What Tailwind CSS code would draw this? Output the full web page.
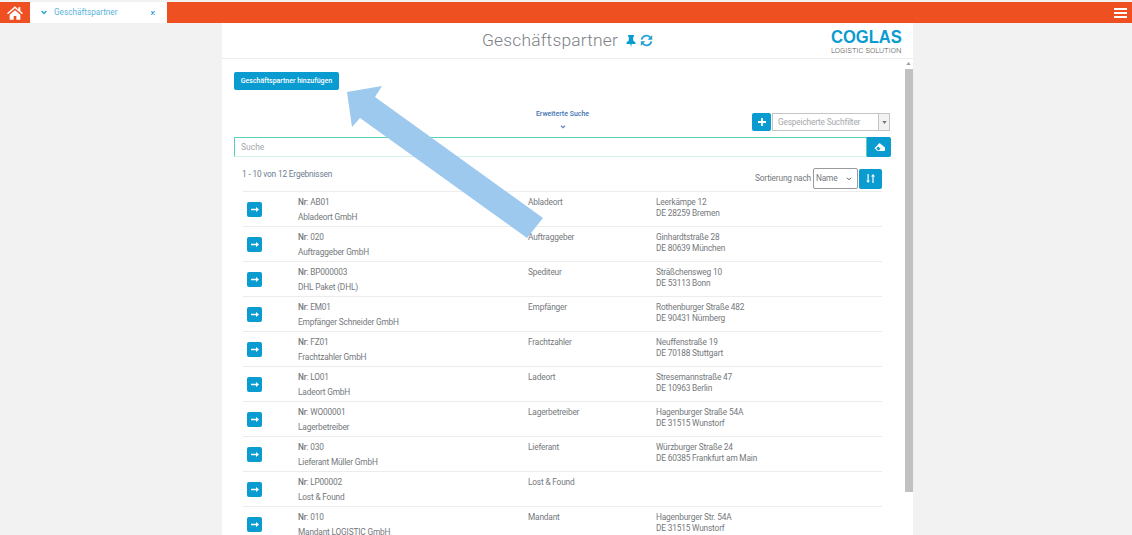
<!DOCTYPE html>
<html lang="de">
<head>
<meta charset="utf-8">
<title>Geschäftspartner</title>
<script src="https://cdn.jsdelivr.net/npm/@tailwindcss/browser@4"></script>
</head>
<body class="relative h-[535px] w-[1132px] overflow-hidden bg-[#f2f2f2] font-['Roboto',sans-serif] text-[8.300px] tracking-[-.17px] text-[#74787c]">
  <!-- top bar -->
  <nav class="mt-[2px] flex h-[21px] bg-[#ef5022]">
    <a class="flex w-[30px] items-center justify-center">
      <svg class="h-[14px] w-[16px] text-white" viewBox="0 0 24 20" fill="currentColor"><path d="M12 0 0 10.200l1.400 1.600L12 2.800l10.600 9 1.400-1.600-4-3.400V1.500h-3v3.200zM4 12.500V20h6v-5.500h4V20h6v-7.500l-8-6.800z"/></svg>
    </a>
    <div class="flex w-[137px] items-center bg-white pr-[12px] pl-[11px] text-[#5bb4dc]">
      <svg class="h-[5px] w-[6px] text-[#2a9fd6]" viewBox="0 0 10 8" fill="none" stroke="currentColor" stroke-width="2.400"><path d="m1 1.500 4 4 4-4"/></svg>
      <span class="ml-[7px] text-[8.200px] tracking-normal">Geschäftspartner</span>
      <svg class="ml-auto h-[4px] w-[4px] text-[#2a9fd6]" viewBox="0 0 6 6" stroke="currentColor" stroke-width="1.800"><path d="m.5.5 5 5m0-5-5 5"/></svg>
    </div>
    <button class="mr-[5px] ml-auto flex w-[13px] flex-col justify-center gap-[2px]">
      <span class="h-[2px] bg-white"></span><span class="h-[2px] bg-white"></span><span class="h-[2px] bg-white"></span>
    </button>
  </nav>

  <main class="ml-[222px] h-[512px] w-[691px] bg-white">
    <header class="relative flex h-[36px] items-center justify-center border-b border-[#eeeeee]">
      <h1 class="text-[17.400px] font-light tracking-[.2px] text-[#7b8086]">Geschäftspartner</h1>
      <svg class="ml-[8px] h-[12px] w-[10px] text-[#0a9bd0]" viewBox="0 0 10 12" fill="currentColor"><path d="M2 0h6v1.200L7.200 2v3.400L9.500 7.600V9H5.700L5 12l-.7-3H.5V7.600l2.300-2.200V2L2 1.200z"/></svg>
      <svg class="ml-[4px] h-[13px] w-[13px] text-[#2a9fd6]" viewBox="0 0 24 24" fill="none" stroke="currentColor" stroke-width="3.400"><path d="M3 10.500A9 9 0 0 1 18.500 6L21 8.500M21 13.500A9 9 0 0 1 5.500 18L3 15.500"/><path fill="currentColor" stroke="none" d="M22.500 2v8.500h-8.500zM1.500 22v-8.500h8.500z"/></svg>
      <div class="absolute top-[6px] right-[12px] flex w-[70px] flex-col items-stretch">
        <span class="origin-left scale-x-[.87] font-['Liberation_Sans',sans-serif] text-[19px] leading-[16px] font-bold tracking-normal whitespace-nowrap text-[#0a9bd0]">COGLAS</span>
        <span class="mt-[1px] text-[7.700px] leading-[9px] font-light tracking-normal whitespace-nowrap text-[#555]">LOGISTIC SOLUTION</span>
      </div>
    </header>

    <div class="flex h-[476px]">
      <section class="w-[682px] overflow-hidden pr-[13px] pl-[12px]">
        <button class="mt-[13px] block h-[18px] w-[105px] rounded-[2px] bg-[#0a9bd0] text-[7px] font-medium tracking-normal text-white">Geschäftspartner hinzufügen</button>

        <div class="mt-[18px] flex h-[28px] items-start">
          <div class="ml-[280px] flex w-[97px] flex-col items-center pt-[1px]">
            <span class="text-[7px] font-medium tracking-normal text-[#3f74b5]">Erweiterte Suche</span>
            <svg class="mt-[5px] h-[4px] w-[6px] text-[#5f87b5]" viewBox="0 0 10 8" fill="none" stroke="currentColor" stroke-width="2.200"><path d="m1 1.500 4 4 4-4"/></svg>
          </div>
          <div class="mt-[5px] mr-[1px] ml-auto flex h-[18px] items-center">
            <button class="flex h-[18px] w-[19px] items-center justify-center rounded-[2px] bg-[#0a9bd0]">
              <svg class="h-[8px] w-[8px] text-white" viewBox="0 0 8 8" stroke="currentColor" stroke-width="1.800"><path d="M4 0v8M0 4h8"/></svg>
            </button>
            <div class="ml-[1px] flex h-[18px] w-[118px] items-center border border-[#c4c4c4] pl-[5px] text-[#a5a8ac]">
              Gespeicherte Suchfilter
              <span class="ml-auto flex h-full w-[11px] items-center justify-center border-l border-[#c4c4c4] bg-[#f2f2f2]">
                <svg class="h-[3px] w-[5px] text-[#777]" viewBox="0 0 6 4" fill="currentColor"><path d="M0 0h6L3 4z"/></svg>
              </span>
            </div>
          </div>
        </div>

        <div class="mt-[1px] flex h-[20px]">
          <div class="flex flex-1 items-center border border-[#5fd0b8] border-b-[#d5f3ec] pl-[6px] text-[8.500px] tracking-normal text-[#a5a8ac]">Suche</div>
          <button class="flex w-[24px] items-center justify-center rounded-r-[2px] bg-[#0a9bd0]">
            <svg class="h-[8px] w-[11px]" viewBox="0 0 22 16" fill="#fff"><path d="M11 0 22 9v5a2 2 0 0 1-2 2H7L1 10.500z"/><path fill="#0a9bd0" d="M4.500 10.500 8.500 7 13 12l-3 2.500H8z"/></svg>
          </button>
        </div>

        <div class="mt-[7px] flex h-[25px] justify-between pr-[9px] pl-[8px]">
          <span class="pt-[4px] text-[#6d7d90]">1 - 10 von 12 Ergebnissen</span>
          <div class="mt-[4px] flex h-[21px] items-center">
            <span class="mr-[2px]">Sortierung nach</span>
            <div class="flex h-[21px] w-[45px] items-center justify-between rounded-[2px] border border-[#9a9a9a] pr-[5px] pl-[2px]">
              Name
              <svg class="h-[4px] w-[6px] text-[#555]" viewBox="0 0 10 8" fill="none" stroke="currentColor" stroke-width="2"><path d="m1 1.500 4 4 4-4"/></svg>
            </div>
            <button class="ml-[1px] flex h-[20px] w-[23px] items-center justify-center rounded-[2px] bg-[#0a9bd0]">
              <svg class="h-[9px] w-[9px] text-white" viewBox="0 0 9 9" fill="currentColor"><path d="M1.500 0h1.200v6.500H4L2.100 9 .2 6.500h1.300zM5 2.500 7 0l2 2.500H7.600V9H6.400V2.500z"/></svg>
            </button>
          </div>
        </div>

        <ul class="mt-[2px] mr-[9px] ml-[9px]">
          <li class="flex h-[35px] border-t border-[#ececec]">
            <div class="flex w-[55px] items-center pl-[4px]"><button class="flex h-[15px] w-[15px] items-center justify-center rounded-[2px] bg-[#0a9bd0]"><svg class="h-[5px] w-[8px] text-white" viewBox="0 0 8 5" fill="currentColor"><path d="M0 1.700h5V0l3 2.500L5 5V3.300H0z"/></svg></button></div>
            <div class="w-[230px] pt-[3px] leading-[14.500px]"><p><b class="font-medium">Nr</b>: AB01</p><p>Abladeort GmbH</p></div>
            <div class="w-[128px] pt-[3px] leading-[14.500px]">Abladeort</div>
            <div class="pt-[4px] leading-[11px]"><p class="mt-[1px]">Leerkämpe 12</p><p>DE 28259 Bremen</p></div>
          </li>
          <li class="flex h-[35px] border-t border-[#ececec]">
            <div class="flex w-[55px] items-center pl-[4px]"><button class="flex h-[15px] w-[15px] items-center justify-center rounded-[2px] bg-[#0a9bd0]"><svg class="h-[5px] w-[8px] text-white" viewBox="0 0 8 5" fill="currentColor"><path d="M0 1.700h5V0l3 2.500L5 5V3.300H0z"/></svg></button></div>
            <div class="w-[230px] pt-[3px] leading-[14.500px]"><p><b class="font-medium">Nr</b>: 020</p><p>Auftraggeber GmbH</p></div>
            <div class="w-[128px] pt-[3px] leading-[14.500px]">Auftraggeber</div>
            <div class="pt-[4px] leading-[11px]"><p class="mt-[1px]">Ginhardtstraße 28</p><p>DE 80639 München</p></div>
          </li>
          <li class="flex h-[35px] border-t border-[#ececec]">
            <div class="flex w-[55px] items-center pl-[4px]"><button class="flex h-[15px] w-[15px] items-center justify-center rounded-[2px] bg-[#0a9bd0]"><svg class="h-[5px] w-[8px] text-white" viewBox="0 0 8 5" fill="currentColor"><path d="M0 1.700h5V0l3 2.500L5 5V3.300H0z"/></svg></button></div>
            <div class="w-[230px] pt-[3px] leading-[14.500px]"><p><b class="font-medium">Nr</b>: BP000003</p><p>DHL Paket (DHL)</p></div>
            <div class="w-[128px] pt-[3px] leading-[14.500px]">Spediteur</div>
            <div class="pt-[4px] leading-[11px]"><p class="mt-[1px]">Sträßchensweg 10</p><p>DE 53113 Bonn</p></div>
          </li>
          <li class="flex h-[35px] border-t border-[#ececec]">
            <div class="flex w-[55px] items-center pl-[4px]"><button class="flex h-[15px] w-[15px] items-center justify-center rounded-[2px] bg-[#0a9bd0]"><svg class="h-[5px] w-[8px] text-white" viewBox="0 0 8 5" fill="currentColor"><path d="M0 1.700h5V0l3 2.500L5 5V3.300H0z"/></svg></button></div>
            <div class="w-[230px] pt-[3px] leading-[14.500px]"><p><b class="font-medium">Nr</b>: EM01</p><p>Empfänger Schneider GmbH</p></div>
            <div class="w-[128px] pt-[3px] leading-[14.500px]">Empfänger</div>
            <div class="pt-[4px] leading-[11px]"><p class="mt-[1px]">Rothenburger Straße 482</p><p>DE 90431 Nürnberg</p></div>
          </li>
          <li class="flex h-[35px] border-t border-[#ececec]">
            <div class="flex w-[55px] items-center pl-[4px]"><button class="flex h-[15px] w-[15px] items-center justify-center rounded-[2px] bg-[#0a9bd0]"><svg class="h-[5px] w-[8px] text-white" viewBox="0 0 8 5" fill="currentColor"><path d="M0 1.700h5V0l3 2.500L5 5V3.300H0z"/></svg></button></div>
            <div class="w-[230px] pt-[3px] leading-[14.500px]"><p><b class="font-medium">Nr</b>: FZ01</p><p>Frachtzahler GmbH</p></div>
            <div class="w-[128px] pt-[3px] leading-[14.500px]">Frachtzahler</div>
            <div class="pt-[4px] leading-[11px]"><p class="mt-[1px]">Neuffenstraße 19</p><p>DE 70188 Stuttgart</p></div>
          </li>
          <li class="flex h-[35px] border-t border-[#ececec]">
            <div class="flex w-[55px] items-center pl-[4px]"><button class="flex h-[15px] w-[15px] items-center justify-center rounded-[2px] bg-[#0a9bd0]"><svg class="h-[5px] w-[8px] text-white" viewBox="0 0 8 5" fill="currentColor"><path d="M0 1.700h5V0l3 2.500L5 5V3.300H0z"/></svg></button></div>
            <div class="w-[230px] pt-[3px] leading-[14.500px]"><p><b class="font-medium">Nr</b>: LO01</p><p>Ladeort GmbH</p></div>
            <div class="w-[128px] pt-[3px] leading-[14.500px]">Ladeort</div>
            <div class="pt-[4px] leading-[11px]"><p class="mt-[1px]">Stresemannstraße 47</p><p>DE 10963 Berlin</p></div>
          </li>
          <li class="flex h-[35px] border-t border-[#ececec]">
            <div class="flex w-[55px] items-center pl-[4px]"><button class="flex h-[15px] w-[15px] items-center justify-center rounded-[2px] bg-[#0a9bd0]"><svg class="h-[5px] w-[8px] text-white" viewBox="0 0 8 5" fill="currentColor"><path d="M0 1.700h5V0l3 2.500L5 5V3.300H0z"/></svg></button></div>
            <div class="w-[230px] pt-[3px] leading-[14.500px]"><p><b class="font-medium">Nr</b>: WO00001</p><p>Lagerbetreiber</p></div>
            <div class="w-[128px] pt-[3px] leading-[14.500px]">Lagerbetreiber</div>
            <div class="pt-[4px] leading-[11px]"><p class="mt-[1px]">Hagenburger Straße 54A</p><p>DE 31515 Wunstorf</p></div>
          </li>
          <li class="flex h-[35px] border-t border-[#ececec]">
            <div class="flex w-[55px] items-center pl-[4px]"><button class="flex h-[15px] w-[15px] items-center justify-center rounded-[2px] bg-[#0a9bd0]"><svg class="h-[5px] w-[8px] text-white" viewBox="0 0 8 5" fill="currentColor"><path d="M0 1.700h5V0l3 2.500L5 5V3.300H0z"/></svg></button></div>
            <div class="w-[230px] pt-[3px] leading-[14.500px]"><p><b class="font-medium">Nr</b>: 030</p><p>Lieferant Müller GmbH</p></div>
            <div class="w-[128px] pt-[3px] leading-[14.500px]">Lieferant</div>
            <div class="pt-[4px] leading-[11px]"><p class="mt-[1px]">Würzburger Straße 24</p><p>DE 60385 Frankfurt am Main</p></div>
          </li>
          <li class="flex h-[35px] border-t border-[#ececec]">
            <div class="flex w-[55px] items-center pl-[4px]"><button class="flex h-[15px] w-[15px] items-center justify-center rounded-[2px] bg-[#0a9bd0]"><svg class="h-[5px] w-[8px] text-white" viewBox="0 0 8 5" fill="currentColor"><path d="M0 1.700h5V0l3 2.500L5 5V3.300H0z"/></svg></button></div>
            <div class="w-[230px] pt-[3px] leading-[14.500px]"><p><b class="font-medium">Nr</b>: LP00002</p><p>Lost &amp; Found</p></div>
            <div class="w-[128px] pt-[3px] leading-[14.500px]">Lost &amp; Found</div>
          </li>
          <li class="flex h-[35px] border-t border-[#ececec]">
            <div class="flex w-[55px] items-center pl-[4px]"><button class="flex h-[15px] w-[15px] items-center justify-center rounded-[2px] bg-[#0a9bd0]"><svg class="h-[5px] w-[8px] text-white" viewBox="0 0 8 5" fill="currentColor"><path d="M0 1.700h5V0l3 2.500L5 5V3.300H0z"/></svg></button></div>
            <div class="w-[230px] pt-[3px] leading-[14.500px]"><p><b class="font-medium">Nr</b>: 010</p><p>Mandant LOGISTIC GmbH</p></div>
            <div class="w-[128px] pt-[3px] leading-[14.500px]">Mandant</div>
            <div class="pt-[4px] leading-[11px]"><p class="mt-[1px]">Hagenburger Str. 54A</p><p>DE 31515 Wunstorf</p></div>
          </li>
        </ul>
      </section>

      <!-- scrollbar -->
      <div class="ml-auto flex w-[9px] flex-col items-center">
        <svg class="mt-[3px] h-[3px] w-[5px] text-[#a0a0a0]" viewBox="0 0 6 4" fill="currentColor"><path d="M3 0l3 4H0z"/></svg>
        <div class="mt-[4px] h-[423px] w-[8px] bg-[#c1c1c1]"></div>
      </div>
    </div>
  </main>

  <!-- annotation arrow -->
  <svg class="pointer-events-none absolute top-0 left-0 h-[535px] w-[1132px]" viewBox="0 0 1132 535"><polygon fill="#9dc9ef" points="347,92 382,86 375,97 543,218 527,238 360,118 352,127"/></svg>
</body>
</html>
